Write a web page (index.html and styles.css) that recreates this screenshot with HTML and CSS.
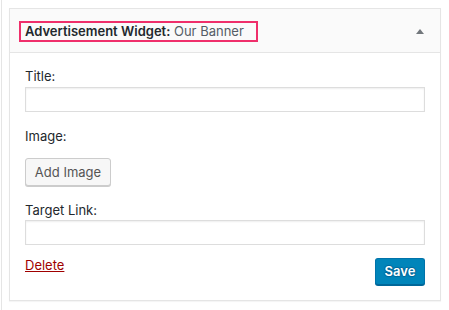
FILE: index.html
```html
<!DOCTYPE html>
<html>
<head>
<meta charset="utf-8">
<link rel="stylesheet" href="styles.css">
</head>
<body>
<div class="page">
  <div class="widget">
    <div class="widget-top">
      <h3 class="widget-title"><span class="name">Advertisement Widget:</span> <span class="instance">Our Banner</span></h3>
      <span class="toggle" aria-hidden="true"></span>
    </div>
    <div class="widget-inside">
      <label class="field-label label-title" for="title">Title:</label>
      <input class="text-input input-title" id="title" type="text">
      <label class="field-label label-image">Image:</label>
      <button class="btn btn-secondary" type="button">Add Image</button>
      <label class="field-label label-link" for="link">Target Link:</label>
      <input class="text-input input-link" id="link" type="text">
      <div class="widget-actions">
        <a class="delete-link" href="#">Delete</a>
        <button class="btn btn-primary" type="button">Save</button>
      </div>
    </div>
  </div>
</div>
</body>
</html>
```

FILE: styles.css
```css
html, body {
  margin: 0;
  padding: 0;
  background: #ffffff;
}
body {
  font-family: Inter, "Liberation Sans", sans-serif;
  font-size: 13px;
  color: #23282d;
}
.page {
  margin-left: 1px;
  border-left: 1px solid #e5e5e5;
  min-height: 310px;
  box-sizing: border-box;
  padding: 8px 0 0 7px;
}
.widget {
  width: 432px;
  box-shadow: 0 1px 1px rgba(0,0,0,0.04);
}
.widget-top {
  height: 45px;
  box-sizing: border-box;
  border: 1px solid #e5e5e5;
  background: #fafafa;
  display: flex;
  align-items: center;
  padding: 0 16px 0 9px;
}
.widget-title {
  margin: 2px 0 0 0;
  border: 2px solid #ef2f6b;
  padding: 0 12px 0 4px;
  font-size: 13px;
  line-height: 17px;
  font-weight: 400;
  white-space: nowrap;
}
.widget-title .name {
  font-weight: 600;
  color: #23282d;
}
.widget-title .instance {
  color: #555d66;
}
.toggle {
  margin-left: auto;
  width: 0;
  height: 0;
  border-left: 4px solid transparent;
  border-right: 4px solid transparent;
  border-bottom: 5px solid #72777c;
  margin-top: 1px;
}
.widget-inside {
  border: 1px solid #e5e5e5;
  border-top: none;
  background: #fff;
  padding: 14px 15px 14px 15px;
  height: 248px;
  box-sizing: border-box;
}
.field-label {
  display: block;
  line-height: 18px;
  color: #23282d;
}
.text-input {
  display: block;
  width: 400px;
  height: 25px;
  box-sizing: border-box;
  margin: 2px 0 0 0;
  border: 1px solid #dddddd;
  box-shadow: inset 0 1px 2px rgba(0,0,0,0.07);
  background: #fff;
  padding: 0 6px;
  font: inherit;
  outline: none;
}
.input-link {
  margin-top: 1px;
}
.label-image {
  margin-top: 15px;
}
.btn {
  display: block;
  font-family: inherit;
  font-size: 13px;
  line-height: 26px;
  height: 28px;
  box-sizing: border-box;
  border-radius: 3px;
  cursor: pointer;
  padding: 0 10px;
  margin: 0;
}
.btn-secondary {
  margin-top: 13px;
  width: 86px;
  background: #f7f7f7;
  border: 1px solid #cccccc;
  box-shadow: 0 1px 0 #cccccc;
  color: #555555;
  padding: 0;
}
.label-link {
  margin-top: 15px;
}
.widget-actions {
  display: flex;
  justify-content: space-between;
  align-items: flex-start;
  margin-top: 11px;
}
.delete-link {
  color: #a00000;
  text-decoration: underline;
  line-height: 18px;
}
.btn-primary {
  margin-top: 2px;
  width: 50px;
  height: 27px;
  line-height: 25px;
  padding: 0;
  background: #0085ba;
  border: 1px solid #0073aa;
  border-bottom-color: #006799;
  box-shadow: 0 1px 0 #006799;
  color: #ffffff;
  font-weight: 600;
  text-shadow: 0 -1px 1px #006799, 1px 0 1px #006799, 0 1px 1px #006799, -1px 0 1px #006799;
}
```
